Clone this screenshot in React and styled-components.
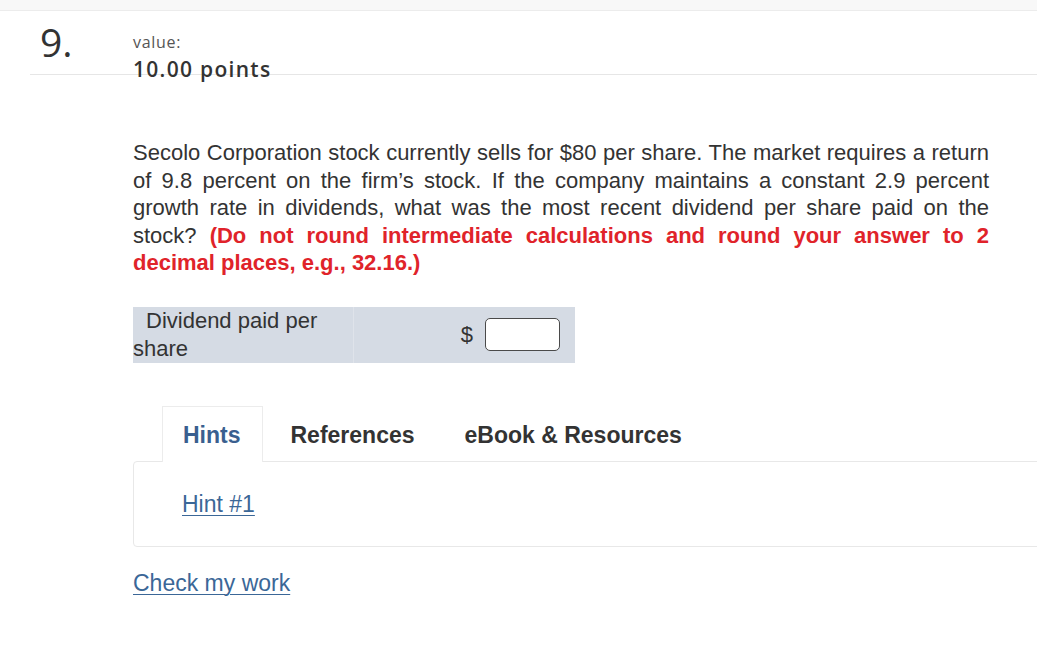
import React from "react";
import styled, { createGlobalStyle } from "styled-components";

const Global = createGlobalStyle`
  html, body { margin: 0; padding: 0; background: #fff; overflow: hidden; }
  body { font-family: "Liberation Sans", Arial, sans-serif; color: #333; }
`;

const Page = styled.div`
  width: 1037px;
  height: 663px;
  overflow: hidden;
  background: #fff;
`;

const TopBand = styled.div`
  height: 10px;
  background: #f8f8f8;
  border-bottom: 1px solid #ececec;
`;

const Header = styled.div`
  display: flex;
  margin-left: 30px;
  height: 63px;
  border-bottom: 1px solid #e6e6e6;
`;

const QNumber = styled.div`
  width: 93px;
  padding-left: 10px;
  padding-top: 9px;
  font-family: "Open Sans", sans-serif;
  font-size: 39px;
  line-height: 44px;
  color: #333;
`;

const Meta = styled.div`
  display: flex;
  flex-direction: column;
  padding-top: 21px;
`;

const MetaLabel = styled.div`
  font-family: "Open Sans", sans-serif;
  font-size: 16px;
  line-height: 20px;
  letter-spacing: 0.7px;
  color: #555;
`;

const MetaValue = styled.div`
  font-family: "Open Sans", sans-serif;
  font-weight: 600;
  font-size: 21px;
  line-height: 28px;
  letter-spacing: 1.3px;
  color: #333;
  margin-top: 3px;
`;

const Content = styled.div`
  margin-left: 133px;
  padding-top: 64px;
`;

const Question = styled.p`
  margin: 0;
  width: 856px;
  font-size: 22px;
  line-height: 27.5px;
  text-align: justify;
  color: #333;
`;

const Emph = styled.strong`
  color: #e0232a;
  font-weight: 700;
`;

const AnswerTable = styled.div`
  display: grid;
  grid-template-columns: 221px 221px;
  margin-top: 30px;
  background: #d5dbe4;
  width: 442px;
`;

const LabelCell = styled.div`
  font-size: 22px;
  line-height: 28px;
  text-indent: 13px;
  color: #333;
  border-right: 1px solid #dfe3ea;
`;

const InputCell = styled.div`
  display: flex;
  align-items: center;
  justify-content: flex-end;
  gap: 12px;
  padding-right: 15px;
  font-size: 22px;
  color: #333;
`;

const AnswerInput = styled.div`
  width: 73px;
  height: 31px;
  border: 1px solid #4a4a4a;
  border-radius: 5px;
  background: #fff;
  margin-top: -1px;
`;

const Tabs = styled.div`
  display: flex;
  gap: 7px;
  margin-top: 43px;
  margin-left: 29px;
  position: relative;
  z-index: 1;
`;

const Tab = styled.div`
  height: 56px;
  line-height: 56px;
  padding: 0 21px 0 20px;
  font-size: 23px;
  font-weight: 700;
  border: 1px solid ${(p) => (p.$active ? "#ececec" : "transparent")};
  border-bottom: none;
  background: ${(p) => (p.$active ? "#fff" : "transparent")};
  color: ${(p) => (p.$active ? "#3a5f8f" : "#333")};
  margin-bottom: -1px;
  box-sizing: border-box;
`;

const TabPanel = styled.div`
  width: 940px;
  height: 86px;
  border: 1px solid #e8e8e8;
  border-radius: 4px;
  box-sizing: border-box;
  padding: 29px 0 0 48px;
`;

const Link = styled.a`
  font-size: 23px;
  line-height: 27px;
  color: #3b6797;
  text-decoration: underline;
  text-underline-offset: 3px;
  text-decoration-thickness: 1px;
  cursor: pointer;
`;

const CheckRow = styled.div`
  margin-top: 23px;
`;

export default function App() {
  return (
    <Page>
      <Global />
      <TopBand />
      <Header>
        <QNumber>9.</QNumber>
        <Meta>
          <MetaLabel>value:</MetaLabel>
          <MetaValue>10.00 points</MetaValue>
        </Meta>
      </Header>
      <Content>
        <Question>
          Secolo Corporation stock currently sells for $80 per share. The market
          requires a return of 9.8 percent on the firm’s stock. If the company
          maintains a constant 2.9 percent growth rate in dividends, what was the
          most recent dividend per share paid on the stock?{" "}
          <Emph>
            (Do not round intermediate calculations and round your answer to 2
            decimal places, e.g., 32.16.)
          </Emph>
        </Question>
        <AnswerTable>
          <LabelCell>Dividend paid per share</LabelCell>
          <InputCell>
            <span>$</span>
            <AnswerInput />
          </InputCell>
        </AnswerTable>
        <Tabs>
          <Tab $active>Hints</Tab>
          <Tab>References</Tab>
          <Tab>eBook &amp; Resources</Tab>
        </Tabs>
        <TabPanel>
          <Link>Hint #1</Link>
        </TabPanel>
        <CheckRow>
          <Link>Check my work</Link>
        </CheckRow>
      </Content>
    </Page>
  );
}
